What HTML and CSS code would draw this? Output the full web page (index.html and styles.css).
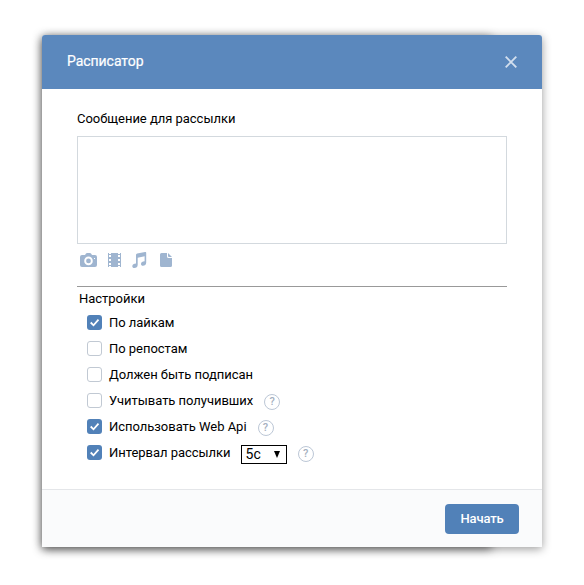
FILE: index.html
```html
<!DOCTYPE html>
<html lang="ru">
<head>
<meta charset="utf-8">
<title>Расписатор</title>
<link rel="stylesheet" href="styles.css">
</head>
<body>
<div class="wrap">
<div class="box">
  <header class="head">
    <span class="title">Расписатор</span>
    <svg class="close" width="12" height="12" viewBox="0 0 12 12"><path d="M.7.7l10.600 10.600M11.300.7L.7 11.300" stroke="#d3dfee" stroke-width="1.900" fill="none"/></svg>
  </header>
  <main class="body">
    <div class="caption">Сообщение для рассылки</div>
    <div class="message"></div>
    <div class="attach">
      <svg width="17" height="14" viewBox="0 0 17 14"><path fill="#9fb5d0" fill-rule="evenodd" d="M2 2h3l1-1.500Q6.400 0 7 0h3q.6 0 1 .5L12 2h3q2 0 2 2v8q0 2-2 2H2q-2 0-2-2V4q0-2 2-2zm6.500 1.600a4.300 4.300 0 1 0 0 8.600 4.300 4.300 0 0 0 0-8.600zm0 1.900a2.400 2.400 0 1 1 0 4.800 2.400 2.400 0 0 1 0-4.800zM14 5v1h1V5z"/></svg>
      <svg width="13" height="14" viewBox="0 0 13 14"><path fill="#9fb5d0" fill-rule="evenodd" d="M0 0h1v1h2V0h7v1h2V0h1v14h-1v-1h-2v1H3v-1H1v1H0zM1 2v2h2V2zM1 6v2h2V6zM1 10v2h2v-2zM10 2v2h2V2zM10 6v2h2V6zM10 10v2h2v-2z"/></svg>
      <svg width="15" height="16" viewBox="0 0 15 16"><path fill="#9fb5d0" d="M4 3q0-1.200 1.200-1.500L13 0q1.200-.2 1.200 1v9.500c0 2.200-1.500 3.200-3.200 3.200-1.300 0-2-.7-2-1.800 0-1.700 1.500-2.200 3.600-2.600V4.300L5.700 5.700v7c0 2.300-1.500 3.300-3.300 3.300C1 16 .3 15.300.3 14.200c0-1.700 1.600-2.200 3.700-2.600z"/></svg>
      <svg width="12" height="14" viewBox="0 0 12 14"><path fill="#9fb5d0" d="M1.500 0H7v3.500Q7 5 8.500 5H12v7.500q0 1.500-1.500 1.500h-9Q0 14 0 12.500v-11Q0 0 1.500 0zM8 0l4 4H9Q8 4 8 3z"/></svg>
    </div>
    <div class="line"></div>
    <div class="settings">Настройки</div>
    <div class="row"><span class="check on"><svg width="15" height="15" viewBox="0 0 15 15"><path d="M3.700 7.500l2.800 2.800 5-5.600"/></svg></span><span>По лайкам</span></div>
    <div class="row"><span class="check"></span><span>По репостам</span></div>
    <div class="row"><span class="check"></span><span>Должен быть подписан</span></div>
    <div class="row"><span class="check"></span><span>Учитывать получивших</span><span class="help">?</span></div>
    <div class="row"><span class="check on"><svg width="15" height="15" viewBox="0 0 15 15"><path d="M3.700 7.500l2.800 2.800 5-5.600"/></svg></span><span>Использовать Web Api</span><span class="help">?</span></div>
    <div class="row"><span class="check on"><svg width="15" height="15" viewBox="0 0 15 15"><path d="M3.700 7.500l2.800 2.800 5-5.600"/></svg></span><span>Интервал рассылки</span><span class="select"><span>5с</span><svg width="6" height="7" viewBox="0 0 6 7"><path d="M0 0h6L3 7z"/></svg></span><span class="help">?</span></div>
  </main>
  <footer class="foot"><button class="start">Начать</button></footer>
</div>
</div>
</body>
</html>
```
FILE: styles.css
```css
* { box-sizing: border-box; }
body {
  margin: 0;
  padding: 35px 42px;
  background: #fff;
  color: #000;
  font: 13px/18px Roboto, "Open Sans", sans-serif;
}
svg { display: block; flex: none; }
.wrap {
  width: 450px;
  height: 512px;
  border-radius: 4px;
  box-shadow: 0 2px 10px rgba(0, 0, 0, .5);
}
.box {
  display: flex;
  flex-direction: column;
  width: 500px;
  height: 512px;
  background: #fff;
  border-radius: 3px 3px 0 0;
  box-shadow: 0 2px 10px rgba(0, 0, 0, .4);
}
.head {
  display: flex;
  align-items: center;
  justify-content: space-between;
  height: 54px;
  padding: 0 25px;
  background: #5b88bd;
  border-radius: 3px 3px 0 0;
}
.title {
  margin-bottom: 2px;
  color: #fff;
  font-size: 14px;
  letter-spacing: -.05px;
  -webkit-text-stroke: .2px #fff;
}
.body { flex: 1; padding: 21px 35px 0; }
.caption, .row { letter-spacing: -.03px; }
.message {
  height: 108px;
  margin-top: 8px;
  border: 1px solid #d3d9de;
}
.attach {
  display: flex;
  align-items: center;
  height: 16px;
  margin: 8px 0 0 3px;
}
.attach svg:nth-child(2) { margin-left: 11px; }
.attach svg:nth-child(3) { margin-left: 11px; }
.attach svg:nth-child(4) { margin-left: 13px; }
.line { height: 1px; margin-top: 18px; background: #999; }
.settings { margin: 3px 0 2px 2px; letter-spacing: -.03px; }
.row {
  display: flex;
  align-items: center;
  height: 26px;
  padding-left: 10px;
}
.check {
  width: 15px;
  height: 15px;
  margin: 0 7px 1px 0;
  border: 1px solid #c1c9d3;
  border-radius: 3px;
}
.check.on { border: 0; background: #5181b8; }
.check path { fill: none; stroke: #fff; stroke-width: 1.8; }
.help {
  width: 16px;
  height: 16px;
  margin: 2px 0 0 11px;
  border: 1px solid #bcc7d6;
  border-radius: 50%;
  color: #a5b0c0;
  font-size: 11px;
  font-weight: 500;
  line-height: 14px;
  text-align: center;
}
.select {
  display: flex;
  align-items: center;
  justify-content: space-between;
  width: 46px;
  height: 19px;
  margin: 3px 0 0 10px;
  padding: 0 6px 1px 4px;
  border: 1px solid #000;
  font-size: 14px;
}
.foot {
  display: flex;
  align-items: center;
  justify-content: flex-end;
  height: 58px;
  padding: 1px 23px 0 0;
  border-top: 1px solid #e4e6e9;
  background: #fafbfc;
}
.start {
  width: 74px;
  height: 30px;
  padding: 0;
  border: 0;
  border-radius: 4px;
  background: #5181b8;
  color: #fff;
  font: 500 13px/30px Roboto, sans-serif;
  letter-spacing: -.15px;
}
```
